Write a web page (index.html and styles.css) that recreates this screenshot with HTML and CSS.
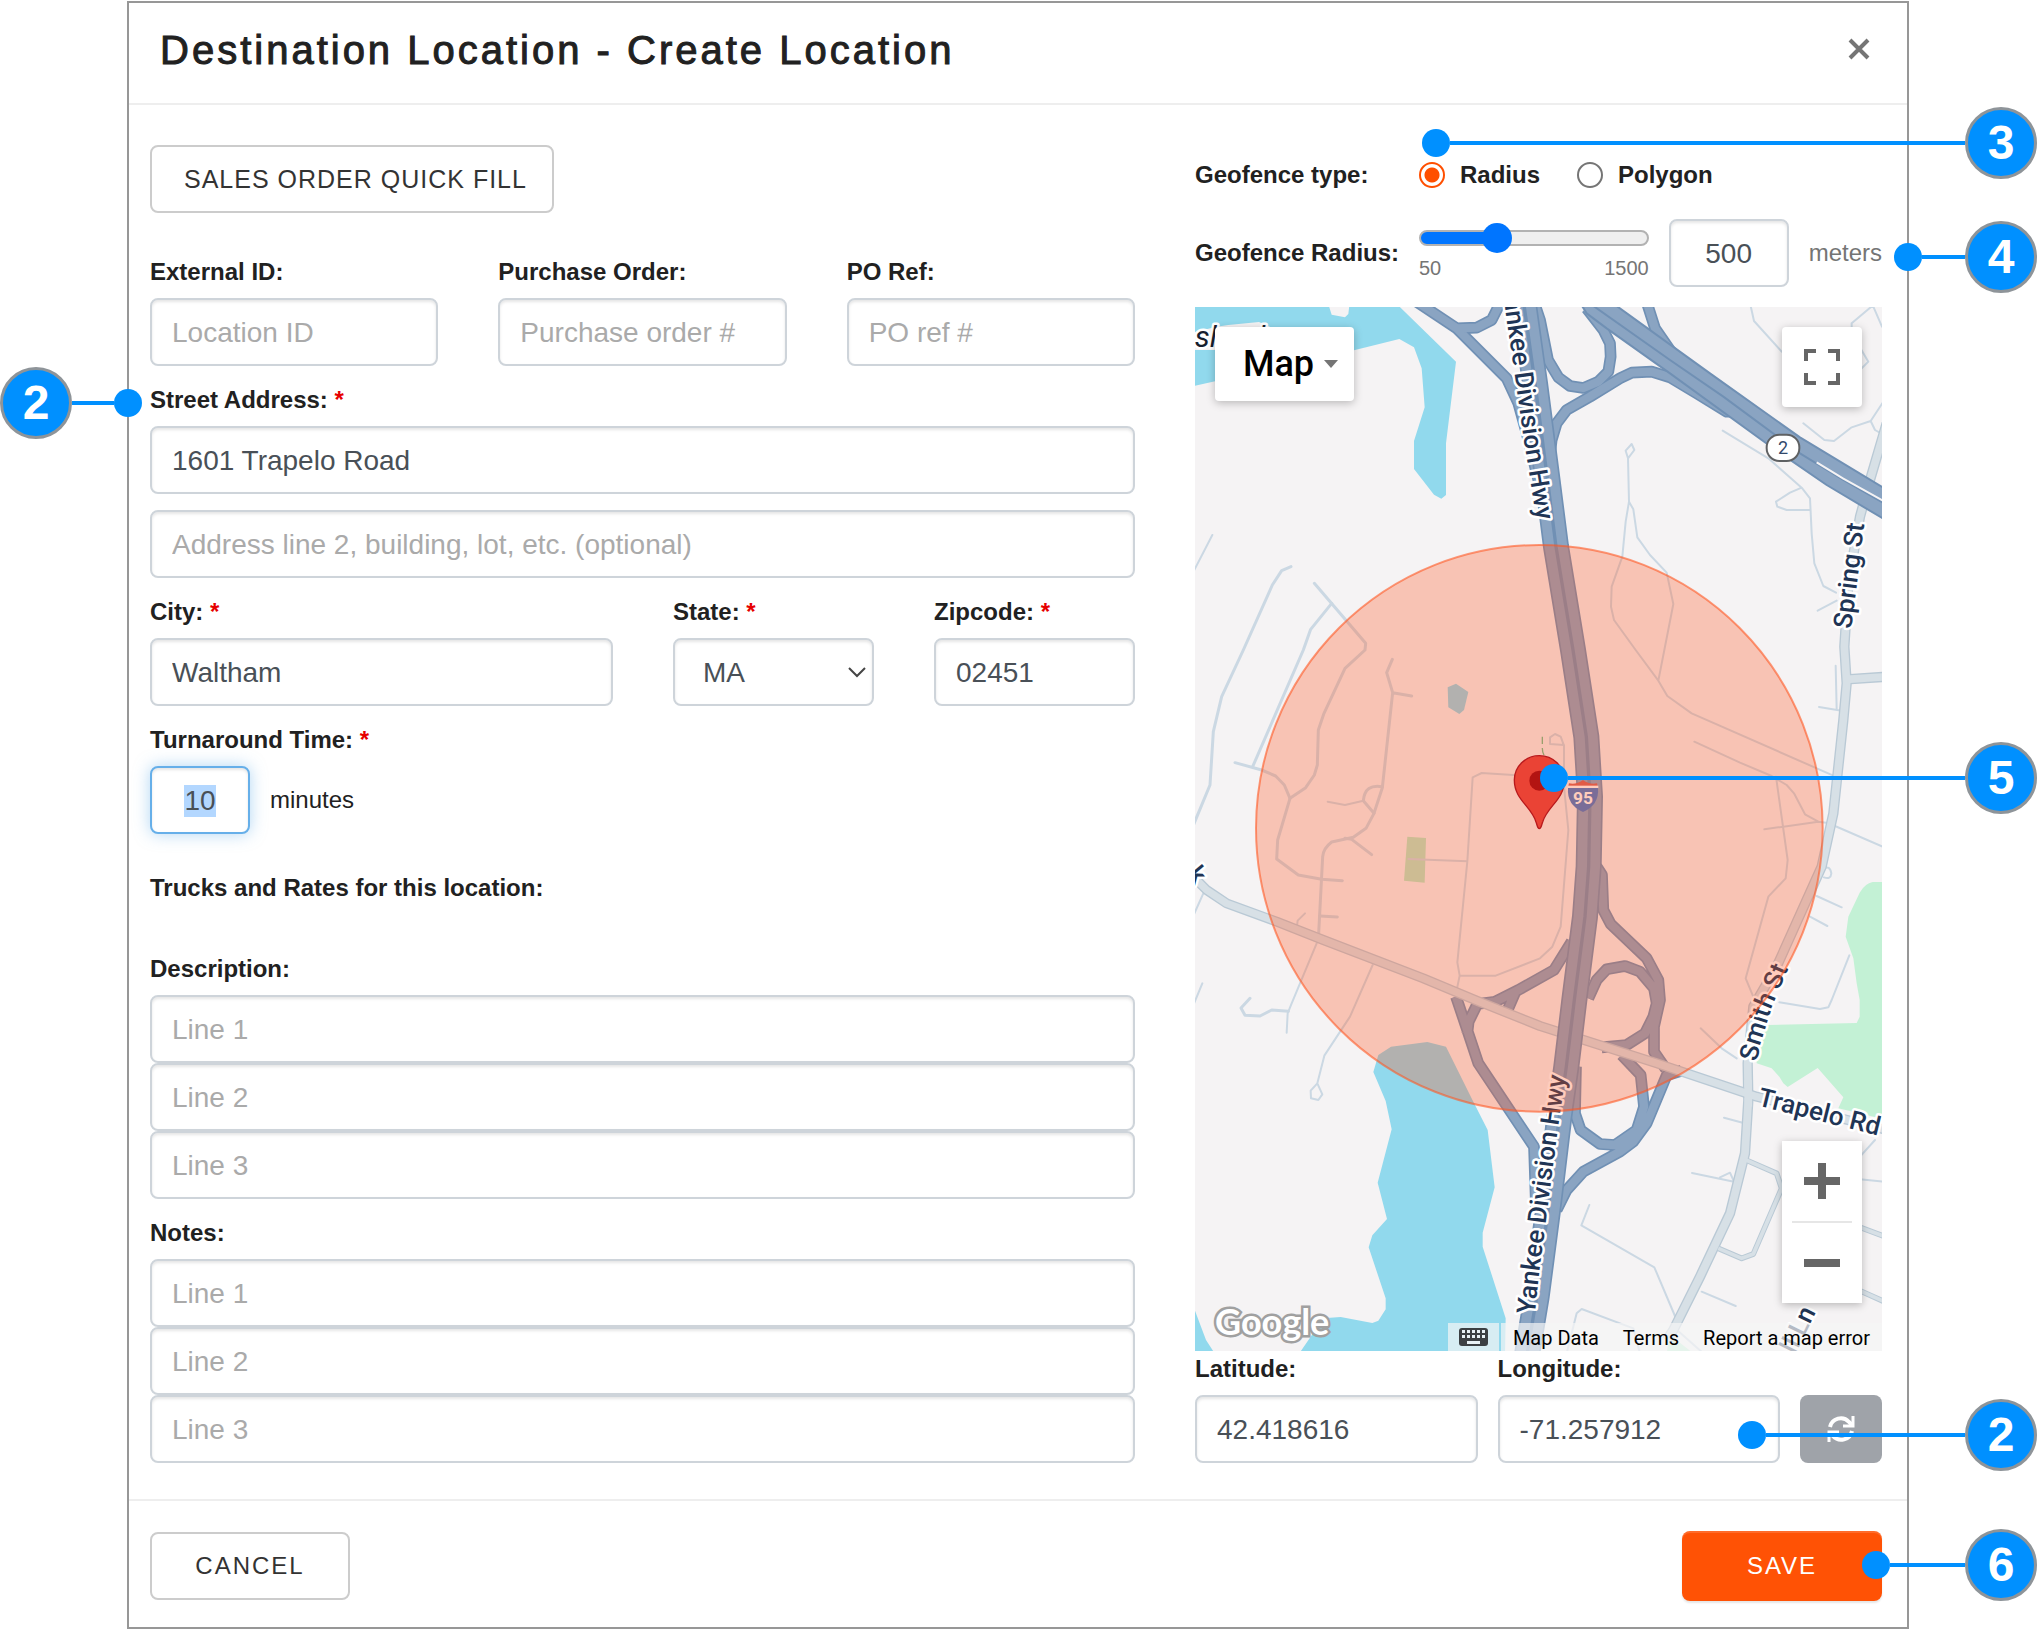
FILE: index.html
```html
<!DOCTYPE html>
<html lang="en">
<head>
<meta charset="utf-8">
<meta name="viewport" content="width=device-width, initial-scale=1">
<title>Destination Location - Create Location</title>
<link rel="stylesheet" href="styles.css">
</head>
<body>
<div class="page">
  <form class="modal" onsubmit="return false">
    <header class="modal-header">
      <h1 class="modal-title">Destination Location - Create Location</h1>
      <button type="button" class="close" aria-label="Close">
        <svg width="22" height="22" viewBox="0 0 22 22"><path d="M2 2L20 20M20 2L2 20" stroke="#757575" stroke-width="4" fill="none"/></svg>
      </button>
    </header>

    <div class="modal-body">
      <div class="col-details">
        <button type="button" class="btn quick-fill">Sales Order Quick Fill</button>

        <div class="row row-thirds">
          <div class="field"><label for="ext-id">External ID:</label><input class="control" id="ext-id" type="text" placeholder="Location ID"></div>
          <div class="field"><label for="po">Purchase Order:</label><input class="control" id="po" type="text" placeholder="Purchase order #"></div>
          <div class="field"><label for="po-ref">PO Ref:</label><input class="control" id="po-ref" type="text" placeholder="PO ref #"></div>
        </div>

        <div class="field address">
          <label for="street">Street Address: <span class="required">*</span></label>
          <input class="control" id="street" type="text" value="1601 Trapelo Road">
          <input class="control" aria-label="Address line 2" type="text" placeholder="Address line 2, building, lot, etc. (optional)">
        </div>

        <div class="row row-city">
          <div class="field"><label for="city">City: <span class="required">*</span></label><input class="control" id="city" type="text" value="Waltham"></div>
          <div class="field"><label for="state">State: <span class="required">*</span></label>
            <div class="select-wrap">
              <select class="control" id="state"><option selected>MA</option><option>NH</option><option>RI</option></select>
              <svg class="select-arrow" width="18" height="12" viewBox="0 0 18 12"><path d="M1 2L9 10L17 2" stroke="#444" stroke-width="2" fill="none"/></svg>
            </div>
          </div>
          <div class="field"><label for="zip">Zipcode: <span class="required">*</span></label><input class="control" id="zip" type="text" value="02451"></div>
        </div>

        <div class="field">
          <label for="turnaround">Turnaround Time: <span class="required">*</span></label>
          <div class="with-unit"><input class="control control-minutes" id="turnaround" type="text" value="10"><span>minutes</span></div>
        </div>

        <h2 class="section-label">Trucks and Rates for this location:</h2>

        <div class="field">
          <label for="desc-1">Description:</label>
          <input class="control" id="desc-1" type="text" placeholder="Line 1">
          <input class="control" aria-label="Description line 2" type="text" placeholder="Line 2">
          <input class="control" aria-label="Description line 3" type="text" placeholder="Line 3">
        </div>

        <div class="field">
          <label for="notes-1">Notes:</label>
          <input class="control" id="notes-1" type="text" placeholder="Line 1">
          <input class="control" aria-label="Notes line 2" type="text" placeholder="Line 2">
          <input class="control" aria-label="Notes line 3" type="text" placeholder="Line 3">
        </div>
      </div>

      <div class="col-map">
        <div class="geo-row geo-type">
          <span class="geo-label">Geofence type:</span>
          <label class="choice"><input type="radio" name="geofence" checked>Radius</label>
          <label class="choice"><input type="radio" name="geofence">Polygon</label>
        </div>
        <div class="geo-row geo-radius">
          <label class="geo-label" for="radius">Geofence Radius:</label>
          <div class="slider">
            <input id="radius" type="range" min="50" max="1500" step="10" value="500">
            <div class="slider-scale"><span>50</span><span>1500</span></div>
          </div>
          <input class="control control-radius" type="text" aria-label="Radius in meters" value="500">
          <span class="unit">meters</span>
        </div>

        <div class="map">
          <svg class="map-canvas" viewBox="15 21 2061 3132" preserveAspectRatio="xMidYMid slice" role="img" aria-label="Map of Trapelo Road">
            <defs>
              <path id="hwy-north" d="M932 -80L950 60L975 230L1003 430L1040 662"/>
              <path id="hwy-south" d="M1034 3044L1050 2900L1076 2700L1102 2500L1132 2290"/>
              <path id="smith" d="M1700 2286L1716 2215L1748 2115L1810 1970"/>
            </defs>
            <rect x="0" y="0" width="2100" height="3200" fill="#f5f3f4"/>
            <g fill="#91d9ed">
              <path d="M0 0H411L425 44L465 52L475 42L480 0H608L798 185L768 430V585L754 596L732 584L672 507V423L704 322L695 205L672 142L628 117L495 150L15 257Z"/>
              <path d="M565 2265L603 2240L712 2226L768 2240L850 2405L893 2490L914 2662L878 2798V2840L947 3055L945 3160H328L362 3110L400 3055L452 3051L547 3069L565 3062L587 3028V2995L536 2842L547 2806L591 2757L563 2648L605 2488L587 2403L550 2316Z"/>
              <path d="M15 3032L48 3120L74 3160H0Z"/>
              <path d="M773 1162L798 1151L835 1176L822 1230L808 1242L775 1222Z"/>
            </g>
            <path d="M80 80L115 75L207 66L250 85V150H0V100Z" fill="#f5f3f4"/>
            <g fill="#c3f1d5">
              <path d="M2090 1746H2048Q2025 1750 2009 1778L1975 1850L1967 1910L1990 1975L2000 2050L2009 2100V2150L2000 2169L1700 2176L1690 2200L1700 2290L1745 2305L1768 2330L1780 2350L1793 2361L1883 2304L1960 2392L1945 2425L2090 2460Z"/>
              <path d="M1440 3105L1510 3160H1430Z"/>
              <path d="M652 1610L708 1614L704 1748L642 1742Z" fill="#b8e8c4"/>
            </g>

            <!-- local streets -->
            <g fill="none" stroke="#cbd8e3" stroke-linejoin="round" stroke-linecap="round">
              <g stroke-width="9">
                <path d="M303 800L275 812L247 855L160 1050L95 1190L70 1295L60 1455L0 1600"/>
                <path d="M373 850L527 1030L525 1050L465 1105L402 1240L385 1290L382 1395L373 1425L347 1463L300 1495L263 1620L260 1677L325 1725L395 1738L457 1742"/>
                <path d="M425 910L362 988L340 1050L188 1400M135 1388L215 1410L257 1428L283 1455L300 1495"/>
                <path d="M607 1078L590 1118L608 1178L577 1463L552 1540L528 1585L490 1612L425 1626Q400 1645 398 1670L386 1900M665 1188L608 1178"/>
                <path d="M520 1502L552 1540M520 1502Q525 1450 577 1460M465 1615L485 1618L545 1664M390 1848L442 1851"/>
                <path d="M295 2134L245 2130L210 2148L165 2146L153 2124L180 2095"/>
              </g>
              <g stroke-width="6">
                <path d="M67 705L0 835M413 1505L465 1515L520 1502M345 1840L323 1862L320 1885M380 1930L305 2110L293 2140L290 2198M40 1780L0 1870M37 2050L0 2140"/>
                <path d="M548 1995L480 2150L403 2267L382 2350L362 2372L363 2395L385 2400L397 2383L382 2350"/>
                <path d="M970 1425L875 1419L848 1432L832 1684L802 1987L809 2027L798 2080M809 2027H917L1050 1975L1087 1940L1112 1880L1135 1590L1122 1460V1335L1080 1332V1312L1095 1302L1112 1310L1122 1337M655 1677L832 1684"/>
                <path d="M1678 0L1692 63L1775 155M1840 370L1903 420L1932 423L1985 382L2042 363L2090 290M2042 363L2055 390L2076 402M1985 70L2050 15M1985 70V100L2035 185L2010 210M2050 20L2076 80"/>
                <path d="M1598 392L1735 475L1835 563L1860 595L1865 700L1873 790L1900 858L1938 878M1835 563L1800 578L1758 605L1762 620L1790 630H1862M1883 932L1940 902"/>
                <path d="M1314 475L1307 452L1325 432L1333 450L1314 475L1317 605L1307 665L1297 770L1265 860L1263 920L1272 960L1337 1050L1405 1142L1432 1188L1505 1240L1930 1427M1317 605L1330 628L1342 712L1380 765L1430 818L1450 912L1423 1050L1405 1142"/>
                <path d="M1513 1325L1650 1388L1745 1428L1790 1455L1812 1480L1845 1543L1885 1565L1920 1570M1723 1588L1885 1565M1758 1430L1793 1680L1787 1735L1735 1790L1667 2035L1692 2095"/>
                <path d="M1937 1097L1940 1228M1887 1221L1955 1232M1935 1578L2090 1645M1880 1788L1955 1822M1860 1850L1912 1878M1978 1966L1925 2100L1915 2122L1890 2127L1768 2107M1900 1705Q1920 1695 1924 1720Q1922 1740 1902 1732"/>
                <path d="M1532 2185L1595 2245L1640 2275M1602 2453L1658 2468M1506 2619L1632 2645L1620 2618L1590 2632M1198 2715L1174 2776L1393 2902L1460 3060M1535 2975L1637 3018M1130 3160L1160 3040L1175 3027L1330 3085L1350 3160"/>
                <path d="M2010 2638L2090 2646M2055 2520L2010 2570M1450 3080L1540 3160"/>
              </g>
            </g>

            <!-- side roads: casing, then fill -->
            <g fill="none" stroke-linejoin="round">
              <g stroke="#b9c9d5">
                <path stroke-width="17" d="M1668 2580L1760 2620L1775 2665L1690 2862L1655 2875L1585 2845M2005 2780L2090 2812M2005 2970L2090 3008"/>
                <path stroke-width="31" d="M2090 370L2040 540L2010 650L1975 850L1963 1040L1970 1150L1960 1260L1930 1540L1895 1700L1760 2000L1690 2120L1673 2290L1675 2400L1665 2560L1620 2740L1530 2930L1450 3090L1430 3120M1970 1138L2090 1130"/>
              </g>
              <g stroke="#d7e0e6">
                <path stroke-width="11" d="M1668 2580L1760 2620L1775 2665L1690 2862L1655 2875L1585 2845M2005 2780L2090 2812M2005 2970L2090 3008"/>
                <path stroke-width="23" d="M2090 370L2040 540L2010 650L1975 850L1963 1040L1970 1150L1960 1260L1930 1540L1895 1700L1760 2000L1690 2120L1673 2290L1675 2400L1665 2560L1620 2740L1530 2930L1450 3090L1430 3120M1970 1138L2090 1130"/>
              </g>
            </g>

            <!-- ramps: casing, then fill -->
            <g fill="none" stroke-linejoin="round">
              <g stroke="#7090b4" stroke-width="35">
                <path d="M672 0L800 85L950 235L985 310L1010 400L1050 560M800 85L860 83L905 60L935 0M1030 0L1050 60L1074 180L1105 232L1140 258L1180 264L1225 245L1255 215L1262 170L1260 130L1240 90L1190 25"/>
                <path d="M1078 480L1085 420L1100 370L1130 330L1200 290L1290 235L1325 218L1385 215L1440 232L1520 280L1610 335L1640 335M1368 0L1395 85L1440 150L1470 185"/>
                <path d="M1220 1700L1236 1725L1240 1830L1262 1872L1370 1975L1405 2040L1410 2100L1392 2180V2255L1428 2308M1195 2095L1220 2040L1250 2008L1305 1998L1350 2015L1392 2065L1400 2110L1390 2150L1365 2200L1310 2235L1235 2242"/>
                <path d="M1475 2312L1430 2326L1370 2470L1330 2525L1290 2555L1180 2615L1130 2670L1100 2730M1295 2265L1352 2325L1362 2420L1340 2490L1275 2535L1230 2532L1172 2490L1155 2440L1158 2300"/>
                <path d="M1145 1925L1092 2010L985 2070L915 2105L862 2112L836 2165L832 2200M798 2090L835 2200L865 2290L1032 2540L1038 2720M978 2072L945 2148"/>
              </g>
              <g stroke="#8aa4c2" stroke-width="25">
                <path d="M672 0L800 85L950 235L985 310L1010 400L1050 560M800 85L860 83L905 60L935 0M1030 0L1050 60L1074 180L1105 232L1140 258L1180 264L1225 245L1255 215L1262 170L1260 130L1240 90L1190 25"/>
                <path d="M1078 480L1085 420L1100 370L1130 330L1200 290L1290 235L1325 218L1385 215L1440 232L1520 280L1610 335L1640 335M1368 0L1395 85L1440 150L1470 185"/>
                <path d="M1220 1700L1236 1725L1240 1830L1262 1872L1370 1975L1405 2040L1410 2100L1392 2180V2255L1428 2308M1195 2095L1220 2040L1250 2008L1305 1998L1350 2015L1392 2065L1400 2110L1390 2150L1365 2200L1310 2235L1235 2242"/>
                <path d="M1475 2312L1430 2326L1370 2470L1330 2525L1290 2555L1180 2615L1130 2670L1100 2730M1295 2265L1352 2325L1362 2420L1340 2490L1275 2535L1230 2532L1172 2490L1155 2440L1158 2300"/>
                <path d="M1145 1925L1092 2010L985 2070L915 2105L862 2112L836 2165L832 2200M798 2090L835 2200L865 2290L1032 2540L1038 2720M978 2072L945 2148"/>
              </g>
            </g>

            <!-- Trapelo Road runs over the ramps and under the interstate -->
            <g fill="none" stroke-linejoin="round">
              <path stroke="#b9c9d5" stroke-width="30" d="M15 1735L50 1770L110 1810L260 1865L400 1920L700 2035L860 2102L1050 2178L1400 2290L1640 2370L1700 2390L2090 2490"/>
              <path stroke="#d7e0e6" stroke-width="22" d="M15 1735L50 1770L110 1810L260 1865L400 1920L700 2035L860 2102L1050 2178L1400 2290L1640 2370L1700 2390L2090 2490"/>
              <path stroke="#d7e0e6" stroke-width="23" d="M1674 2340L1675 2420"/>
            </g>

            <!-- main highways -->
            <g fill="none" stroke-linejoin="round">
              <path stroke="#7090b4" stroke-width="78" d="M1000 0L1035 250L1070 520L1098 740L1149 1050L1189 1310L1200 1490L1196 1700L1185 1850L1153 2100L1129 2300L1108 2450L1078 2700L1040 2990L1010 3170"/>
              <path stroke="#8aa4c2" stroke-width="68" d="M1000 0L1035 250L1070 520L1098 740L1149 1050L1189 1310L1200 1490L1196 1700L1185 1850L1153 2100L1129 2300L1108 2450L1078 2700L1040 2990L1010 3170"/>
              <path stroke="#7090b4" stroke-width="10" d="M1000 0L1035 250L1070 520L1098 740L1149 1050L1189 1310L1200 1490L1196 1700L1185 1850L1153 2100L1129 2300L1108 2450L1078 2700L1040 2990L1010 3170"/>
              <path d="M1165 0L1190 40L1250 85L1440 220L1740 438L1910 555L2100 668V575L1830 412L1560 220L1255 0Z" fill="#8aa4c2" stroke="#7090b4" stroke-width="6"/>
              <path d="M1185 0L1440 180L1600 290L1830 460L1960 540L2100 620" stroke="#7090b4" stroke-width="6"/>
              <path d="M1880 487L1960 536L2090 608" stroke="#f5f3f4" stroke-width="6"/>
            </g>
            <path d="M1057 1310V1345Q1057 1362 1066 1370" fill="none" stroke="#6fbf8d" stroke-width="4" stroke-dasharray="22 12"/>

            <!-- place and road names -->
            <g class="map-text">
              <text class="water-name" x="14" y="140">sland</text>
              <text text-anchor="end"><textPath href="#hwy-north" startOffset="100%">Yankee Division Hwy</textPath></text>
              <text><textPath href="#hwy-south">Yankee Division Hwy</textPath></text>
              <text><textPath href="#smith">Smith St</textPath></text>
              <text transform="translate(1984 988) rotate(-83)">Spring St</text>
              <text transform="translate(1700 2416) rotate(14)">Trapelo Rd</text>
              <text transform="translate(1815 3165) rotate(-64)">ll Ln</text>
              <text transform="translate(-12 1726) rotate(50)">k</text>
            </g>
            <g>
              <rect x="1730" y="404" width="98" height="79" rx="38" fill="#fff" stroke="#5f6163" stroke-width="6"/>
              <text class="route" x="1779" y="463">2</text>
              <path d="M1137 1450Q1158 1455 1179 1440Q1200 1455 1221 1450L1223 1458H1135Z" fill="#d65d57"/>
              <path d="M1134 1464H1224Q1228 1515 1179 1536Q1130 1515 1134 1464Z" fill="#4178cc"/>
              <path d="M1133 1457H1225V1464H1133Z" fill="#fff"/>
              <text class="interstate" x="1179" y="1511">95</text>
            </g>

            <circle cx="1048" cy="1585" r="850" fill="#ff5722" fill-opacity=".3" stroke="#ff5722" stroke-opacity=".6" stroke-width="6"/>

            <path d="M1048 1586C1042 1586 1042 1576 1038 1566C1024 1518 973 1500 973 1440A75 73 0 0 1 1123 1440C1123 1500 1072 1518 1058 1566C1054 1576 1054 1586 1048 1586Z" fill="#ea4335" stroke="#b8191c" stroke-width="4"/>
            <circle cx="1048" cy="1442" r="30" fill="#b31412"/>
          </svg>

          <button type="button" class="map-btn map-type">Map<span class="caret"></span></button>
          <button type="button" class="map-btn map-full" aria-label="Toggle fullscreen view">
            <svg width="36" height="36" viewBox="0 0 36 36"><path d="M0 12V0H12V4H4V12ZM24 0H36V12H32V4H24ZM0 24H4V32H12V36H0ZM32 24H36V36H24V32H32Z" fill="#666"/></svg>
          </button>
          <div class="map-zoom">
            <button type="button" aria-label="Zoom in"><svg width="36" height="36" viewBox="0 0 36 36"><path d="M14 0H22V14H36V22H22V36H14V22H0V14H14Z" fill="#666"/></svg></button>
            <button type="button" aria-label="Zoom out"><svg width="36" height="36" viewBox="0 0 36 36"><path d="M0 14H36V22H0Z" fill="#666"/></svg></button>
          </div>
          <a class="map-logo" href="#">Google</a>
          <div class="map-legal">
            <button type="button" class="map-keys" aria-label="Keyboard shortcuts">
              <svg width="29" height="18" viewBox="0 0 29 18"><rect width="29" height="18" rx="3" fill="#3c4043"/><path d="M3 2h3v3h-3zM8 2h3v3h-3zM13 2h3v3h-3zM18 2h3v3h-3zM23 2h3v3h-3zM3 7h3v3h-3zM8 7h3v3h-3zM13 7h3v3h-3zM18 7h3v3h-3zM23 7h3v3h-3zM8 13h13v3h-13z" fill="#e8f1f5"/></svg>
            </button>
            <a href="#">Map Data</a><a href="#">Terms</a><a href="#">Report a map error</a>
          </div>
        </div>

        <div class="coords">
          <div class="field"><label for="lat">Latitude:</label><input class="control" id="lat" type="text" value="42.418616"></div>
          <div class="field"><label for="lng">Longitude:</label><input class="control" id="lng" type="text" value="-71.257912"></div>
          <button type="button" class="refresh" aria-label="Refresh coordinates">
            <svg width="28" height="28" viewBox="0 0 28 28" fill="none" stroke="#fff" stroke-width="4"><path d="M3 12A11 11 0 0 1 22 7L25 10M25 16A11 11 0 0 1 6 21L3 18"/><path d="M26 1V11H16M2 27V17H12" stroke-width="3"/></svg>
          </button>
        </div>
      </div>
    </div>

    <footer class="modal-footer">
      <button type="button" class="btn">Cancel</button>
      <button type="submit" class="btn btn-primary">Save</button>
    </footer>
  </form>

  <!-- numbered callouts laid over the dialog -->
  <div class="callout callout-address"><span class="badge">2</span><span class="lead"></span><span class="dot"></span></div>
  <div class="callout callout-right callout-type"><span class="dot"></span><span class="lead"></span><span class="badge">3</span></div>
  <div class="callout callout-right callout-radius"><span class="dot"></span><span class="lead"></span><span class="badge">4</span></div>
  <div class="callout callout-right callout-pin"><span class="dot"></span><span class="lead"></span><span class="badge">5</span></div>
  <div class="callout callout-right callout-coords"><span class="dot"></span><span class="lead"></span><span class="badge">2</span></div>
  <div class="callout callout-right callout-save"><span class="dot"></span><span class="lead"></span><span class="badge">6</span></div>
</div>
<script>
  var minutes = document.getElementById('turnaround');
  minutes.focus();
  minutes.select();
</script>
</body>
</html>
```
FILE: styles.css
```css
* { box-sizing: border-box; }

body {
  margin: 0;
  background: #fff;
  color: #212121;
  font: 24px/36px "Liberation Sans", Arial, sans-serif;
}

button, input, select { font: inherit; margin: 0; }

.page { position: relative; padding: 1px 129px 1px 127px; }

.modal { border: 2px solid #979797; background: #fff; }

.modal-header {
  display: flex;
  justify-content: space-between;
  align-items: flex-start;
  height: 102px;
  padding: 22px 23px 0 31px;
  border-bottom: 2px solid #eee;
}

.modal-title {
  margin: 0;
  font-size: 40px;
  font-weight: 400;
  line-height: 50px;
  letter-spacing: 3px;
  -webkit-text-stroke: 1px #212121;
}

.close {
  display: flex;
  padding: 13px 14px;
  border: 0;
  background: none;
}

.modal-body {
  display: grid;
  grid-template-columns: 985fr 687fr;
  gap: 60px;
  padding: 40px 25px 36px 21px;
}

.btn {
  height: 68px;
  min-width: 200px;
  padding: 0 24px;
  border: 2px solid #ccc;
  border-radius: 8px;
  background: #fff;
  color: #333;
  font-size: 24px;
  letter-spacing: 2px;
  text-transform: uppercase;
}

.quick-fill {
  display: block;
  margin-bottom: 25px;
  padding: 0 25px 0 32px;
  font-size: 25px;
  letter-spacing: 1px;
}

.btn-primary {
  height: 70px;
  border: 0;
  background: #ff5205;
  color: #fff;
  box-shadow: inset 0 2px 0 rgba(255, 255, 255, .15), 0 2px 2px rgba(0, 0, 0, .1);
}

.row { display: grid; column-gap: 60px; }
.row-thirds { grid-template-columns: repeat(3, 1fr); }
.row-city { grid-template-columns: 463fr 201fr 201fr; }

.field { display: flex; flex-direction: column; min-width: 0; }
.field > label { padding: 16px 0 8px; font-weight: 700; }
.required { color: #e60000; }

.control {
  width: 100%;
  min-width: 0;
  height: 68px;
  padding: 1px 20px 0;
  border: 2px solid #ced4da;
  border-radius: 8px;
  background: #fff;
  box-shadow: inset 0 2px 3px rgba(0, 0, 0, .1);
  color: #495057;
  font-size: 28px;
  outline: 0;
}
.control::placeholder { color: #aaa; opacity: 1; }
.control:focus {
  border-color: #66afe9;
  box-shadow: inset 0 2px 3px rgba(0, 0, 0, .1), 0 0 16px rgba(102, 175, 233, .5);
}
.control::selection { background: #b3d7ff; color: #495057; }

.address .control + .control { margin-top: 16px; }

.select-wrap { position: relative; }
.select-wrap .control { padding-left: 28px; appearance: none; }
.select-arrow { position: absolute; right: 8px; top: 28px; pointer-events: none; }

.with-unit { display: flex; align-items: center; gap: 20px; }
.control-minutes { width: 100px; text-align: center; }

.section-label { margin: 36px 0 21px; padding-bottom: 8px; font-size: 24px; line-height: 36px; }

.col-map { display: flex; flex-direction: column; min-width: 0; }

.geo-row { display: flex; align-items: center; }
.geo-label { width: 224px; flex: none; font-weight: 700; }
.geo-type { height: 60px; margin-bottom: 14px; }
.geo-radius { height: 68px; margin-bottom: 20px; }

.choice { display: flex; align-items: center; gap: 15px; margin-right: 37px; font-weight: 700; }
.choice input {
  appearance: none;
  width: 26px;
  height: 26px;
  border: 2px solid #757575;
  border-radius: 50%;
}
.choice input:checked {
  border-color: #ff4f00;
  background: radial-gradient(circle, #ff4f00 7px, #fff 8px);
}

.slider { flex: 1; min-width: 0; }
.slider input {
  display: block;
  appearance: none;
  width: 100%;
  height: 30px;
  background: none;
  outline: 0;
}
.slider input::-webkit-slider-runnable-track {
  height: 16px;
  border: 2px solid #b2b2b2;
  border-radius: 8px;
  background: linear-gradient(90deg, #0075ff 33%, #efefef 33%);
}
.slider input::-webkit-slider-thumb {
  appearance: none;
  width: 30px;
  height: 30px;
  margin-top: -9px;
  border-radius: 50%;
  background: #0075ff;
}
.slider-scale {
  display: flex;
  justify-content: space-between;
  color: #757575;
  font-size: 20px;
  line-height: 30px;
}
.control-radius { width: 120px; flex: none; margin: 0 20px; text-align: center; }
.unit { color: #757575; }

.map { position: relative; flex: 1; min-height: 600px; overflow: hidden; font-family: Roboto, sans-serif; }
.map-canvas { position: absolute; inset: 0; width: 100%; height: 100%; }

.map-text text {
  font-size: 78px;
  font-weight: 500;
  fill: #1f3555;
  stroke: #fff;
  stroke-width: 15px;
  stroke-linejoin: round;
  paint-order: stroke;
}
.map-text .water-name { font-size: 90px; font-weight: 400; font-style: italic; fill: #16202e; }
.route, .interstate { text-anchor: middle; font-size: 54px; fill: #33496b; }
.interstate { font-size: 52px; font-weight: 700; fill: #fff; }

.map-btn {
  position: absolute;
  top: 20px;
  display: flex;
  align-items: center;
  justify-content: center;
  border: 0;
  border-radius: 4px;
  background: #fff;
  box-shadow: 0 2px 8px rgba(0, 0, 0, .25);
}
.map-type {
  left: 20px;
  width: 139px;
  height: 74px;
  padding: 0 0 0 12px;
  gap: 10px;
  color: #000;
  font-size: 36px;
  font-weight: 500;
}
.caret { border: 7px solid transparent; border-top: 8px solid #757575; border-bottom: 0; }
.map-full { right: 20px; width: 80px; height: 80px; padding: 0; }

.map-zoom {
  position: absolute;
  right: 20px;
  bottom: 48px;
  width: 80px;
  background: #fff;
  box-shadow: 0 2px 8px rgba(0, 0, 0, .25);
}
.map-zoom button {
  display: flex;
  align-items: center;
  justify-content: center;
  width: 60px;
  height: 80px;
  margin: 0 10px;
  padding: 0;
  border: 0;
  background: none;
}
.map-zoom button + button { height: 82px; border-top: 2px solid #e6e6e6; }

.map-logo {
  position: absolute;
  left: 20px;
  bottom: 8px;
  color: #fff;
  font: 700 36px/44px Lato, sans-serif;
  text-decoration: none;
  -webkit-text-stroke: 5px #a0a0a0;
  paint-order: stroke fill;
}

.map-legal {
  position: absolute;
  right: 0;
  bottom: 0;
  display: flex;
  height: 28px;
  font-size: 20px;
  line-height: 30px;
}
.map-legal a { padding: 0 12px; background: rgba(245, 245, 245, .7); color: #000; text-decoration: none; }
.map-keys {
  display: flex;
  align-items: center;
  justify-content: center;
  width: 51px;
  margin-right: 2px;
  padding: 0;
  border: 0;
  background: rgba(245, 245, 245, .7);
}

.coords { display: grid; grid-template-columns: 1fr 1fr 82px; column-gap: 20px; align-items: end; }
.coords .field > label { padding-top: 0; }
.refresh {
  display: flex;
  align-items: center;
  justify-content: center;
  height: 68px;
  border: 0;
  border-radius: 8px;
  background: #9fa3a9;
}

.modal-footer {
  display: flex;
  justify-content: space-between;
  align-items: center;
  padding: 30px 25px 26px 21px;
  border-top: 2px solid #eee;
}

.callout { position: absolute; display: flex; align-items: center; height: 72px; pointer-events: none; }
.callout .badge {
  width: 72px;
  height: 72px;
  border: 3px solid #8e9499;
  border-radius: 50%;
  background: #0090ff;
  color: #fff;
  font-size: 48px;
  font-weight: 700;
  line-height: 66px;
  text-align: center;
}
.callout .lead { flex: 1; height: 4px; background: #0090ff; }
.callout .dot { width: 28px; height: 28px; border-radius: 50%; background: #0090ff; }
.callout-address { left: 0; top: 367px; width: 142px; }
.callout-right { right: 1px; }
.callout-type { top: 107px; width: 615px; }
.callout-radius { top: 221px; width: 143px; }
.callout-pin { top: 742px; width: 497px; }
.callout-coords { top: 1399px; width: 299px; }
.callout-save { top: 1529px; width: 175px; }
```
